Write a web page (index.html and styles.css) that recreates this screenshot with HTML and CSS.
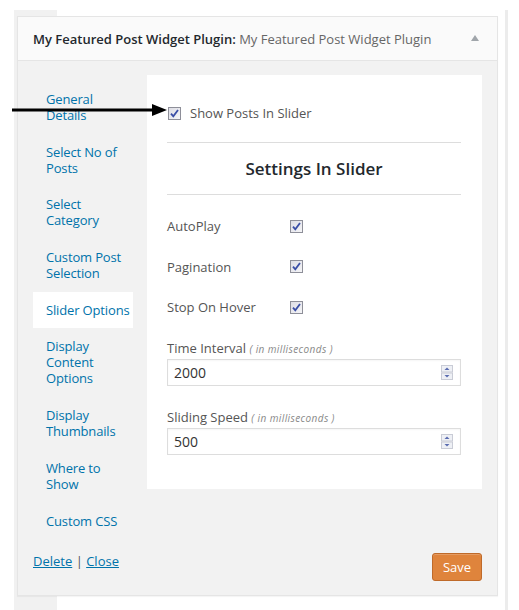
FILE: index.html
```html
<!DOCTYPE html>
<html>
<head>
<meta charset="utf-8">
<link rel="stylesheet" href="styles.css">
</head>
<body>
<div class="page">
  <div class="widget">
    <div class="w-head">
      <div class="w-title"><strong>My Featured Post Widget Plugin:</strong> <span class="sub">My Featured Post Widget Plugin</span></div>
      <span class="tri"></span>
    </div>
    <div class="w-body">
      <div class="main">
        <ul class="nav">
          <li><a>General Details</a></li>
          <li><a>Select No of Posts</a></li>
          <li><a>Select Category</a></li>
          <li><a>Custom Post Selection</a></li>
          <li class="active"><a>Slider Options</a></li>
          <li><a>Display Content Options</a></li>
          <li><a>Display Thumbnails</a></li>
          <li><a>Where to Show</a></li>
          <li><a>Custom CSS</a></li>
        </ul>
        <div class="panel">
          <div class="show-row">
            <svg class="cb" width="13" height="13" viewBox="0 0 13 13"><defs><linearGradient id="g1" x1="0" y1="0" x2="1" y2="1"><stop offset="0" stop-color="#dcdce4"/><stop offset="1" stop-color="#f6f6f8"/></linearGradient></defs><rect x="0.5" y="0.5" width="12" height="12" fill="url(#g1)" stroke="#8e8f99"/><path d="M3 6.6 L5.3 9.3 L10 3" fill="none" stroke="#3a4ea6" stroke-width="1.8"/></svg>
            <span class="show-label">Show Posts In Slider</span>
          </div>
          <hr class="sep">
          <h3 class="heading">Settings In Slider</h3>
          <hr class="sep sep2">
          <div class="opt"><span class="opt-label">AutoPlay</span><svg class="cb" width="13" height="13" viewBox="0 0 13 13"><rect x="0.5" y="0.5" width="12" height="12" fill="url(#g1)" stroke="#8e8f99"/><path d="M3 6.6 L5.3 9.3 L10 3" fill="none" stroke="#3a4ea6" stroke-width="1.8"/></svg></div>
          <div class="opt"><span class="opt-label">Pagination</span><svg class="cb" width="13" height="13" viewBox="0 0 13 13"><rect x="0.5" y="0.5" width="12" height="12" fill="url(#g1)" stroke="#8e8f99"/><path d="M3 6.6 L5.3 9.3 L10 3" fill="none" stroke="#3a4ea6" stroke-width="1.8"/></svg></div>
          <div class="opt"><span class="opt-label">Stop On Hover</span><svg class="cb" width="13" height="13" viewBox="0 0 13 13"><rect x="0.5" y="0.5" width="12" height="12" fill="url(#g1)" stroke="#8e8f99"/><path d="M3 6.6 L5.3 9.3 L10 3" fill="none" stroke="#3a4ea6" stroke-width="1.8"/></svg></div>
          <div class="fld first">
            <div class="fld-label">Time Interval <em>( in milliseconds )</em></div>
            <div class="inp"><span>2000</span>
              <svg class="spin" width="12" height="15" viewBox="0 0 12 15"><rect x="0.5" y="0.5" width="11" height="6.5" fill="#eef0f5" stroke="#c9ccd6"/><rect x="0.5" y="8" width="11" height="6.5" fill="#eef0f5" stroke="#c9ccd6"/><path d="M3.5 5 L6 2.5 L8.5 5Z" fill="#5a6cb0"/><path d="M3.5 10 L6 12.5 L8.5 10Z" fill="#5a6cb0"/></svg>
            </div>
          </div>
          <div class="fld">
            <div class="fld-label">Sliding Speed <em>( in milliseconds )</em></div>
            <div class="inp"><span>500</span>
              <svg class="spin" width="12" height="15" viewBox="0 0 12 15"><rect x="0.5" y="0.5" width="11" height="6.5" fill="#eef0f5" stroke="#c9ccd6"/><rect x="0.5" y="8" width="11" height="6.5" fill="#eef0f5" stroke="#c9ccd6"/><path d="M3.5 5 L6 2.5 L8.5 5Z" fill="#5a6cb0"/><path d="M3.5 10 L6 12.5 L8.5 10Z" fill="#5a6cb0"/></svg>
            </div>
          </div>
        </div>
      </div>
      <div class="footer">
        <div class="links"><a>Delete</a> | <a>Close</a></div>
        <button class="save">Save</button>
      </div>
    </div>
  </div>
  <svg class="arrow" width="156" height="14" viewBox="0 0 156 14"><rect x="0" y="5.5" width="142" height="3" fill="#000"/><path d="M140 1 L155 7 L140 13Z" fill="#000"/></svg>
</div>
</body>
</html>
```

FILE: styles.css
```css
* { box-sizing: border-box; }
html, body { margin: 0; padding: 0; }
body {
  font-family: "Open Sans", "Noto Sans", sans-serif;
  font-size: 13px;
  color: #555;
  background:
    linear-gradient(#f1f1f1, #f1f1f1) 14px 10px / 43px 600px no-repeat,
    linear-gradient(#ececec, #ececec) 505px 10px / 3px 600px no-repeat,
    #fff;
  width: 519px;
  height: 610px;
  overflow: hidden;
}
.page {
  position: relative;
  padding: 16px 0 0 17px;
}
.widget {
  width: 481px;
  height: 580px;
  border: 1px solid #e5e5e5;
  background: #f2f2f2;
  display: flex;
  flex-direction: column;
  box-shadow: 0 1px 1px rgba(0,0,0,0.04);
}
.w-head {
  height: 44px;
  background: #fafafa;
  border-bottom: 1px solid #e5e5e5;
  display: flex;
  align-items: center;
  justify-content: space-between;
  padding: 0 18px 0 15px;
}
.w-title {
  font-size: 13px;
  color: #666;
  line-height: 16px;
}
.w-title strong { color: #23282d; font-weight: 600; }
.tri {
  width: 0; height: 0;
  border-left: 4px solid transparent;
  border-right: 4px solid transparent;
  border-bottom: 6px solid #a0a5aa;
  margin-top: -2px;
}
.w-body {
  flex: 1;
  display: flex;
  flex-direction: column;
}
.main {
  display: flex;
  align-items: flex-start;
  padding: 14px 15px 0 15px;
}
.nav {
  list-style: none;
  margin: 6px 14px 0 0;
  padding: 0;
  width: 100px;
  flex: none;
}
.nav li {
  padding: 10px 0 10px 13px;
  line-height: 16px;
  margin-bottom: 0.7px;
  letter-spacing: -0.15px;
}
.nav a { color: #0073aa; font-size: 13px; }
.nav li.active { background: #fff; }
.panel {
  flex: 1;
  background: #fff;
  padding: 20px 21px 34px 20px;
}
.show-row {
  height: 36px;
  display: flex;
  align-items: center;
}
.show-row .cb { margin-left: 1px; }
.cb { display: block; flex: none; }
.show-label { margin-left: 9px; color: #555; }
.sep {
  border: 0;
  border-top: 1px solid #ddd;
  margin: 11px 0 0 0;
  height: 0;
}
.heading {
  margin: 14px 0 0 0;
  text-align: center;
  font-size: 17px;
  font-weight: 600;
  line-height: 24px;
  color: #23282d;
}
.sep2 { margin-top: 13px; }
.opt {
  height: 40.5px;
  display: flex;
  align-items: center;
}
.sep2 + .opt { margin-top: 11px; }
.opt-label { width: 123px; color: #555; }
.fld { margin-top: 22px; }
.fld.first { margin-top: 11px; }
.fld-label { line-height: 18px; color: #555; }
.fld-label em {
  font-size: 10px;
  letter-spacing: 0.4px;
  color: #888;
  font-style: italic;
}
.inp {
  margin-top: 1px;
  height: 27px;
  border: 1px solid #ddd;
  box-shadow: inset 0 1px 2px rgba(0,0,0,0.04);
  display: flex;
  align-items: center;
  justify-content: space-between;
  padding: 0 7px 0 6px;
  font-size: 14px;
  color: #333;
}
.footer {
  display: flex;
  justify-content: space-between;
  align-items: flex-start;
  padding: 14px 15px 0 15px;
}
.links { line-height: 16px; color: #555; }
.links a { color: #0073aa; text-decoration: underline; }
.save {
  width: 50px;
  height: 28px;
  background: #df843c;
  border: 1px solid #bf6a2a;
  border-radius: 3px;
  color: #fff;
  font-family: "Open Sans", "Noto Sans", sans-serif;
  font-size: 13px;
  padding: 0;
  margin-top: 0;
  box-shadow: inset 0 1px 0 rgba(255,255,255,0.2);
}
.arrow {
  position: absolute;
  left: 12px;
  top: 103px;
}
```
